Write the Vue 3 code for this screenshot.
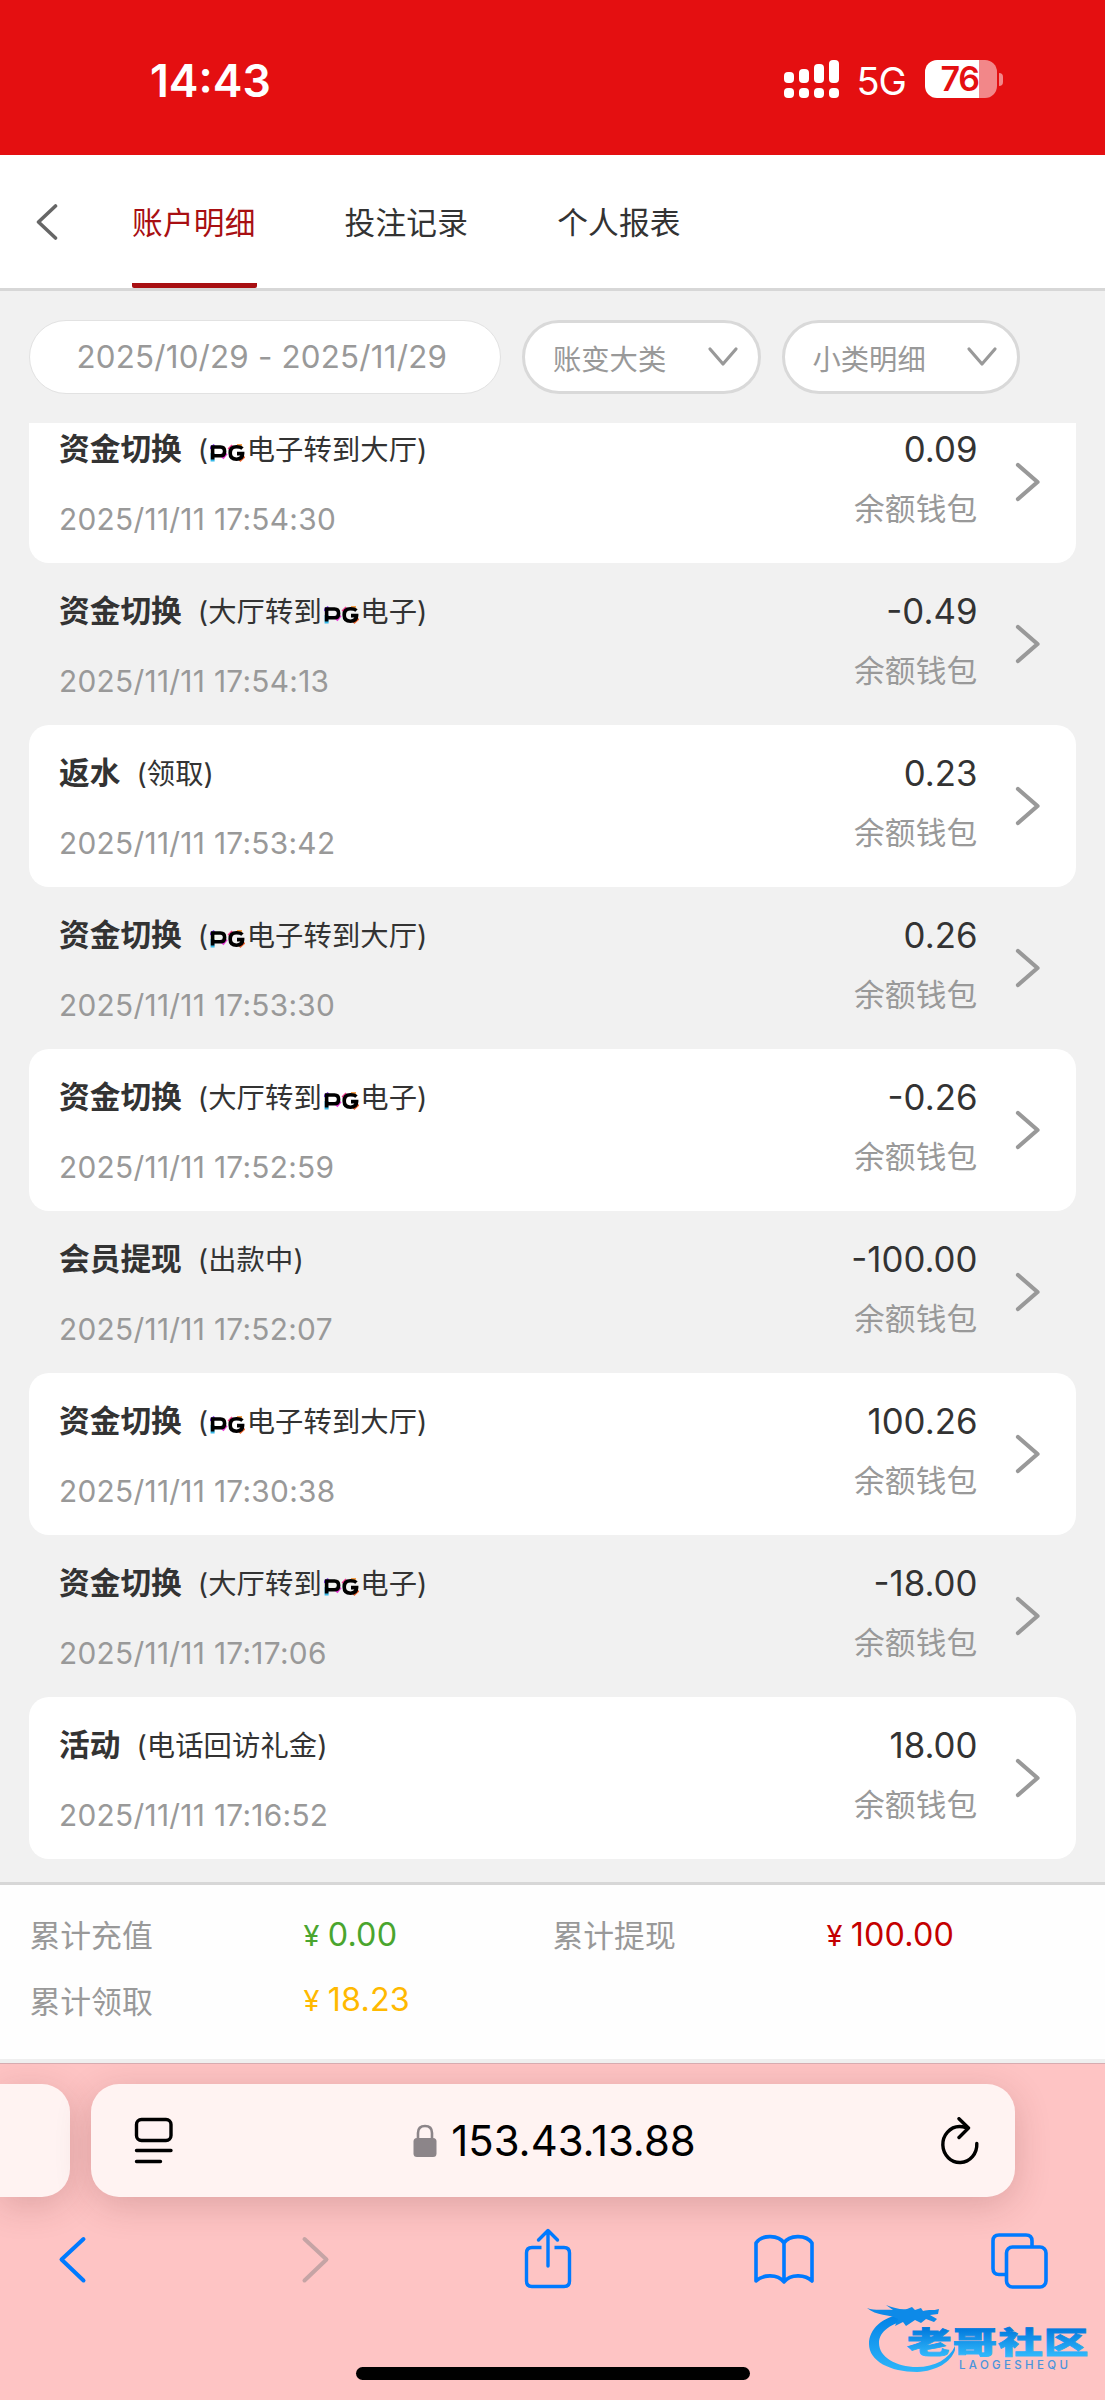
<template>
  <div class="page">
    <!-- Status bar -->
    <div class="status-bar">
      <div class="clock">14:43</div>
      <svg class="signal" width="56" height="38" viewBox="0 0 56 38" fill="#fff">
        <rect x="0" y="12" width="10" height="11" rx="4" />
        <rect x="15" y="9" width="10" height="14" rx="4" />
        <rect x="30" y="4" width="10" height="19" rx="4" />
        <rect x="45" y="0" width="10" height="23" rx="4" />
        <rect v-for="n in 4" :key="'dot-'+n" :x="(n - 1) * 15" y="28" width="10" height="10" rx="4" />
      </svg>
      <div class="network">5G</div>
      <div class="battery"><span>76</span></div>
      <div class="battery-cap"></div>
    </div>

    <!-- Header -->
    <header class="header">
      <svg class="back" width="24" height="38" viewBox="0 0 24 38">
        <path d="M21.5 3 L4.5 19 L21.5 35" fill="none" stroke="#666" stroke-width="3.6" stroke-linecap="round" stroke-linejoin="round" />
      </svg>
      <nav class="tabs">
        <div v-for="(tab, index) in tabs" :key="'tab-'+index" class="tab" :class="{ active: index === 0 }">{{ tab }}</div>
      </nav>
    </header>

    <!-- Filters -->
    <div class="filters">
      <div class="pill date">2025/10/29 - 2025/11/29</div>
      <div v-for="name in filters" :key="name" class="pill select">
        <span>{{ name }}</span>
        <svg width="32" height="22" viewBox="0 0 32 22">
          <path d="M3 3 L16 18 L29 3" fill="none" stroke="#999" stroke-width="3.2" stroke-linecap="round" stroke-linejoin="round" />
        </svg>
      </div>
    </div>

    <!-- Records -->
    <div class="list-view">
      <div class="list">
        <div v-for="(item, index) in records" :key="'rec-'+index" class="record">
          <div class="info">
            <div class="title">
              <b>{{ item.title }}</b>
              <span class="note">({{ item.before }}<svg v-if="item.pg" class="pg" width="35" height="18" viewBox="0 0 35 18" fill="none" stroke-width="4">
                <path d="M2.6 17.5 V9" stroke="#35b8e8" />
                <path d="M0.5 5 L5 1.5" stroke="#8a3df0" />
                <path d="M12 14 L16 9" stroke="#e83ad8" />
                <path d="M27 2 H32" stroke="#f5a04a" />
                <path d="M29 16.5 L34 12" stroke="#f0642c" />
                <path d="M19 6 L23 2" stroke="#f03c8c" />
                <path d="M2.6 15.5 V3 H10.5 Q14.6 3 14.6 7.4 Q14.6 11.8 10.5 11.8 H4" stroke="#000" stroke-width="3.6" />
                <path d="M32.5 4.5 Q30.5 2.8 26.5 2.8 Q20.2 2.8 20.2 9 Q20.2 15.2 26.5 15.2 Q32.6 15.2 32.6 9.6 H27" stroke="#000" stroke-width="3.6" />
              </svg>{{ item.after }})</span>
            </div>
            <div class="time">{{ item.time }}</div>
          </div>
          <div class="money">
            <div class="amount">{{ item.amount }}</div>
            <div class="wallet">余额钱包</div>
          </div>
          <svg class="arrow" width="28" height="42" viewBox="0 0 28 42">
            <path d="M4 4 L23.5 21 L4 38" fill="none" stroke="#999" stroke-width="4.2" stroke-linecap="round" stroke-linejoin="round" />
          </svg>
        </div>
      </div>
    </div>

    <!-- Totals -->
    <div class="totals">
      <template v-for="total in totals" :key="total.label">
        <div class="total-label">{{ total.label }}</div>
        <div class="total-value" :class="total.color"><i>¥</i>{{ total.value }}</div>
      </template>
    </div>

    <!-- Browser toolbar -->
    <div class="browser">
      <div class="address-row">
        <div class="prev-tab"></div>
        <div class="address">
          <svg class="reader" width="40" height="48" viewBox="0 0 40 48" fill="none" stroke="#000" stroke-width="3.4" stroke-linecap="round">
            <rect x="2.5" y="2.5" width="34.5" height="21" rx="5" />
            <path d="M2.5 33.5 H37 M2.5 44.5 H26.5" />
          </svg>
          <div class="host">
            <svg width="24" height="34" viewBox="0 0 24 34">
              <path d="M5 15 V9 Q5 2 12 2 Q19 2 19 9 V15" fill="none" stroke="#8c8589" stroke-width="2.6" />
              <rect x="0.5" y="14" width="23" height="19" rx="3.5" fill="#8c8589" />
            </svg>
            <span>153.43.13.88</span>
          </div>
          <svg class="reload" width="40" height="48" viewBox="0 0 40 48" fill="none" stroke="#000" stroke-width="3.4" stroke-linecap="round" stroke-linejoin="round">
            <path d="M26 10.5 Q22.5 9.5 19.5 9.5 A17 18 0 1 0 36.8 26.500" />
            <path d="M19 1.7 L28.5 11 L19 20.5" />
          </svg>
        </div>
      </div>

      <div class="tools">
        <svg class="tool back-tool" viewBox="0 0 60 70" fill="none" stroke="#007aff" stroke-width="4" stroke-linecap="round" stroke-linejoin="round">
          <path d="M41.5 14 L19.5 34.5 L41.5 55.5" />
        </svg>
        <svg class="tool next-tool" viewBox="0 0 60 70" fill="none" stroke="#c5a4a5" stroke-width="4" stroke-linecap="round" stroke-linejoin="round">
          <path d="M18.5 14 L40.5 34.5 L18.5 55.5" />
        </svg>
        <svg class="tool share-tool" viewBox="0 0 60 70" fill="none" stroke="#007aff" stroke-width="3.4" stroke-linecap="round" stroke-linejoin="round">
          <path d="M23.5 22.5 H14 Q8.5 22.5 8.5 28 V56 Q8.5 61.5 14 61.5 H46 Q51.5 61.5 51.5 56 V28 Q51.5 22.5 46 22.5 H36.5" stroke-linecap="butt" />
          <path d="M30 41 V6 M20.5 15 L30 5.5 L39.5 15" />
        </svg>
        <svg class="tool book-tool" viewBox="0 0 60 70" fill="none" stroke="#007aff" stroke-width="3.6" stroke-linecap="round" stroke-linejoin="round">
          <path d="M30 18 C25 10 8 9 2 18 V56 C8 50 23 48 30 57 C37 48 52 50 58 56 V18 C52 9 35 10 30 18 V57" />
        </svg>
        <svg class="tool tabs-tool" viewBox="0 0 60 70" fill="none" stroke="#007aff" stroke-width="3.6">
          <path d="M16 49.5 H10 Q4 49.5 4 43.5 V16 Q4 10 10 10 H37 Q43 10 43 16 V21" />
          <rect x="17.5" y="22" width="39.5" height="40" rx="6" />
        </svg>
      </div>

      <div class="home-indicator"></div>

      <!-- Community logo -->
      <svg class="logo" width="235" height="90" viewBox="0 0 235 90">
        <defs>
          <linearGradient id="blue" x1="0" y1="0" x2="0" y2="1">
            <stop offset="0" stop-color="#0080e6" />
            <stop offset="1" stop-color="#2fb6fa" />
          </linearGradient>
          <linearGradient id="blue-name" gradientUnits="userSpaceOnUse" x1="0" y1="-26" x2="0" y2="2">
            <stop offset="0" stop-color="#0078dc" />
            <stop offset="1" stop-color="#2fb6fa" />
          </linearGradient>
        </defs>
        <path fill="url(#blue)" d="M38 12 C17 15 4 27 4 42 C4 59 25 70 52 70 C72 69 86 60 90 48 L90 44 C84 57 70 65 52 65 C31 65 14 55 14 41 C14 29 27 21 43 18 Z" />
        <path fill="#0d8ae8" d="M2 6 C10 9 19 7 28 8 L21 3 C29 6 36 8 42 7 L47 5 L50 8 L56 6 L58 9 C64 7 68 9 74 7 L73 12 L65 13 L72 17 L69 20 L61 17 L56 21 L50 18 L41 24 L38 20 L30 24 L33 17 C25 12 11 14 2 6 Z" />
        <g transform="translate(42 51) scale(1.44 0.97)">
          <text class="logo-name" x="0" y="0" textLength="126" fill="url(#blue-name)" stroke="url(#blue-name)" stroke-width="0.8">老哥社区</text>
        </g>
        <text class="logo-latin" x="94" y="66.5" textLength="109" fill="#4a95dc">LAOGESHEQU</text>
      </svg>
    </div>
  </div>
</template>

<script setup>
const tabs = ['账户明细', '投注记录', '个人报表']
const filters = ['账变大类', '小类明细']

// pg marks the records that carry the PG brand between the two note parts
const toHall = { title: '资金切换', before: '', pg: true, after: '电子转到大厅' }
const toGame = { title: '资金切换', before: '大厅转到', pg: true, after: '电子' }

const records = [
  { ...toHall, time: '2025/11/11 17:54:30', amount: '0.09' },
  { ...toGame, time: '2025/11/11 17:54:13', amount: '-0.49' },
  { title: '返水', before: '领取', time: '2025/11/11 17:53:42', amount: '0.23' },
  { ...toHall, time: '2025/11/11 17:53:30', amount: '0.26' },
  { ...toGame, time: '2025/11/11 17:52:59', amount: '-0.26' },
  { title: '会员提现', before: '出款中', time: '2025/11/11 17:52:07', amount: '-100.00' },
  { ...toHall, time: '2025/11/11 17:30:38', amount: '100.26' },
  { ...toGame, time: '2025/11/11 17:17:06', amount: '-18.00' },
  { title: '活动', before: '电话回访礼金', time: '2025/11/11 17:16:52', amount: '18.00' }
]

const totals = [
  { label: '累计充值', value: '0.00', color: 'green' },
  { label: '累计提现', value: '100.00', color: 'red' },
  { label: '累计领取', value: '18.23', color: 'yellow' }
]
</script>

<style>
body {
  margin: 0;
  background-color: #f1f1f1;
}
</style>

<style scoped>
.page {
  width: 1105px;
  height: 2400px;
  overflow: hidden;
  display: flex;
  flex-direction: column;
  background-color: #f1f1f1;
  font-family: Inter, "Noto Sans CJK SC", sans-serif;
  color: #333;
  white-space: nowrap;
}

.page svg {
  display: block;
  flex: none;
}

/* Status bar */
.status-bar {
  flex: none;
  height: 155px;
  box-sizing: border-box;
  padding: 60px 0 0 150px;
  display: flex;
  align-items: flex-start;
  background-color: #e40f11;
  color: #fff;
}

.clock {
  width: 634px;
  font-size: 44.6px;
  line-height: 42px;
  font-weight: 600;
}

.network {
  width: 68.5px;
  margin-left: 16.5px;
  font-size: 38px;
  line-height: 43px;
  letter-spacing: -1px;
}

.battery {
  width: 72px;
  height: 38px;
  border-radius: 12px;
  background: linear-gradient(90deg, #fff 54px, #f28789 54px);
  color: #e40f11;
  font-size: 34px;
  line-height: 38px;
  font-weight: 600;
  text-align: center;
  letter-spacing: -1.5px;
}

.battery span {
  margin-right: 3px;
}

.battery-cap {
  width: 4px;
  height: 13px;
  margin: 13px 0 0 2px;
  border-radius: 0 4px 4px 0;
  background-color: #f28789;
}

/* Header */
.header {
  flex: none;
  height: 133px;
  display: flex;
  align-items: stretch;
  background-color: #fff;
  border-bottom: 3px solid #d7d7d7;
}

.back {
  margin: 48px 0 0 34px;
}

.tabs {
  display: flex;
  gap: 87.6px;
  margin-left: 74px;
}

.tab {
  width: 125px;
  box-sizing: border-box;
  font-size: 30.7px;
  letter-spacing: 0.2px;
  line-height: 135px;
}

.tab.active {
  color: #a80f12;
  border-bottom: 5px solid #a80f12;
  border-radius: 2px;
}

/* Filters */
.filters {
  flex: none;
  height: 132px;
  box-sizing: border-box;
  padding: 29px 29px 0;
  display: flex;
  color: #999;
}

.pill {
  height: 74px;
  box-sizing: border-box;
  border-radius: 37px;
  background-color: #fff;
}

.date {
  width: 472px;
  padding-left: 46.5px;
  border: 1px solid #e2e2e2;
  font-size: 31.3px;
  letter-spacing: 0.2px;
  line-height: 72px;
}

.select {
  width: 238.5px;
  margin-left: 21px;
  padding: 0 19px 0 28px;
  display: flex;
  align-items: center;
  justify-content: space-between;
  border: 3px solid #d9d9d9;
  font-size: 28.3px;
}

/* Records */
.list-view {
  flex: none;
  height: 1459px;
  padding: 0 29px;
  overflow: hidden;
}

.list {
  margin-top: -22px;
}

.record {
  height: 162px;
  box-sizing: border-box;
  padding: 0 34.5px 0 30px;
  display: flex;
  border-radius: 20px;
}

.record:nth-child(odd) {
  background-color: #fff;
}

.info {
  flex: 1;
}

.title {
  display: flex;
  align-items: baseline;
  margin-top: 26px;
  height: 44px;
  line-height: 44px;
}

.title b {
  font-size: 30.7px;
  font-weight: 700;
}

.note {
  margin-left: 16px;
  font-size: 28.3px;
  letter-spacing: 0.1px;
}

.page .pg {
  display: inline-block;
  margin: 0 1.5px 0 2px;
  vertical-align: -2px;
}

.time {
  margin-top: 28px;
  font-size: 29.8px;
  letter-spacing: 0.3px;
  line-height: 40px;
  color: #999;
}

.money {
  text-align: right;
}

.amount {
  margin-top: 25px;
  font-size: 34.8px;
  line-height: 46px;
}

.wallet {
  margin-top: 15px;
  font-size: 30.7px;
  line-height: 44px;
  letter-spacing: 0.2px;
  color: #999;
}

.arrow {
  margin: 60px 0 0 36px;
}

/* Totals */
.totals {
  flex: none;
  height: 181px;
  box-sizing: border-box;
  padding: 16px 0 0 29.5px;
  display: grid;
  grid-template-columns: 274px 249px 274px 249px;
  grid-auto-rows: 65.5px;
  align-content: start;
  align-items: center;
  background-color: #fefefe;
  border-top: 3px solid #d7d7d7;
  box-shadow: inset 0 -4px 0 #efefef;
}

.total-label {
  font-size: 30.8px;
  color: #999;
}

.total-value {
  padding-top: 1px;
  font-size: 32.3px;
  letter-spacing: 0.2px;
}

.total-value i {
  font-style: normal;
  font-size: 29px;
  margin-right: 8px;
}

.green {
  color: #4aa52e;
}

.red {
  color: #c40000;
}

.yellow {
  color: #ffb900;
}

/* Browser toolbar */
.browser {
  position: relative;
  flex: 1;
  display: flex;
  flex-direction: column;
  overflow: hidden;
  background-color: #fec4c4;
  border-top: 1px solid #d6abb0;
}

.address-row {
  display: flex;
  margin-top: 20px;
  height: 113px;
}

.prev-tab,
.address {
  box-sizing: border-box;
  background-color: #fff3f2;
  box-shadow: 0 8px 36px rgba(90, 30, 30, 0.2);
}

.prev-tab {
  width: 70px;
  border-radius: 0 28px 28px 0;
}

.address {
  width: 924px;
  margin-left: 20.5px;
  padding: 0 35px 0 43px;
  display: flex;
  align-items: center;
  border-radius: 28px;
}

.host {
  flex: 1;
  display: flex;
  align-items: center;
  justify-content: center;
  gap: 14px;
  padding-right: 4px;
  font-size: 41.8px;
  color: #000;
}

.tools {
  display: flex;
  margin-top: 28px;
}

.tool {
  width: 60px;
  height: 70px;
}

.back-tool {
  margin-left: 42px;
}

.next-tool {
  margin-left: 183.5px;
}

.share-tool {
  margin-left: 172px;
}

.book-tool {
  margin-left: 176.5px;
}

.tabs-tool {
  margin-left: 175px;
}

.home-indicator {
  width: 394px;
  height: 13px;
  margin: 72px auto 0;
  border-radius: 7px;
  background-color: #000;
}

/* The logo floats over the toolbar corner */
.logo {
  position: absolute;
  right: 5px;
  bottom: 8px;
}

.logo-name {
  font-family: "Noto Sans CJK SC", sans-serif;
  font-size: 31px;
  font-weight: 900;
}

.logo-latin {
  font-family: Inter, sans-serif;
  font-size: 11.5px;
  font-weight: 500;
}
</style>
